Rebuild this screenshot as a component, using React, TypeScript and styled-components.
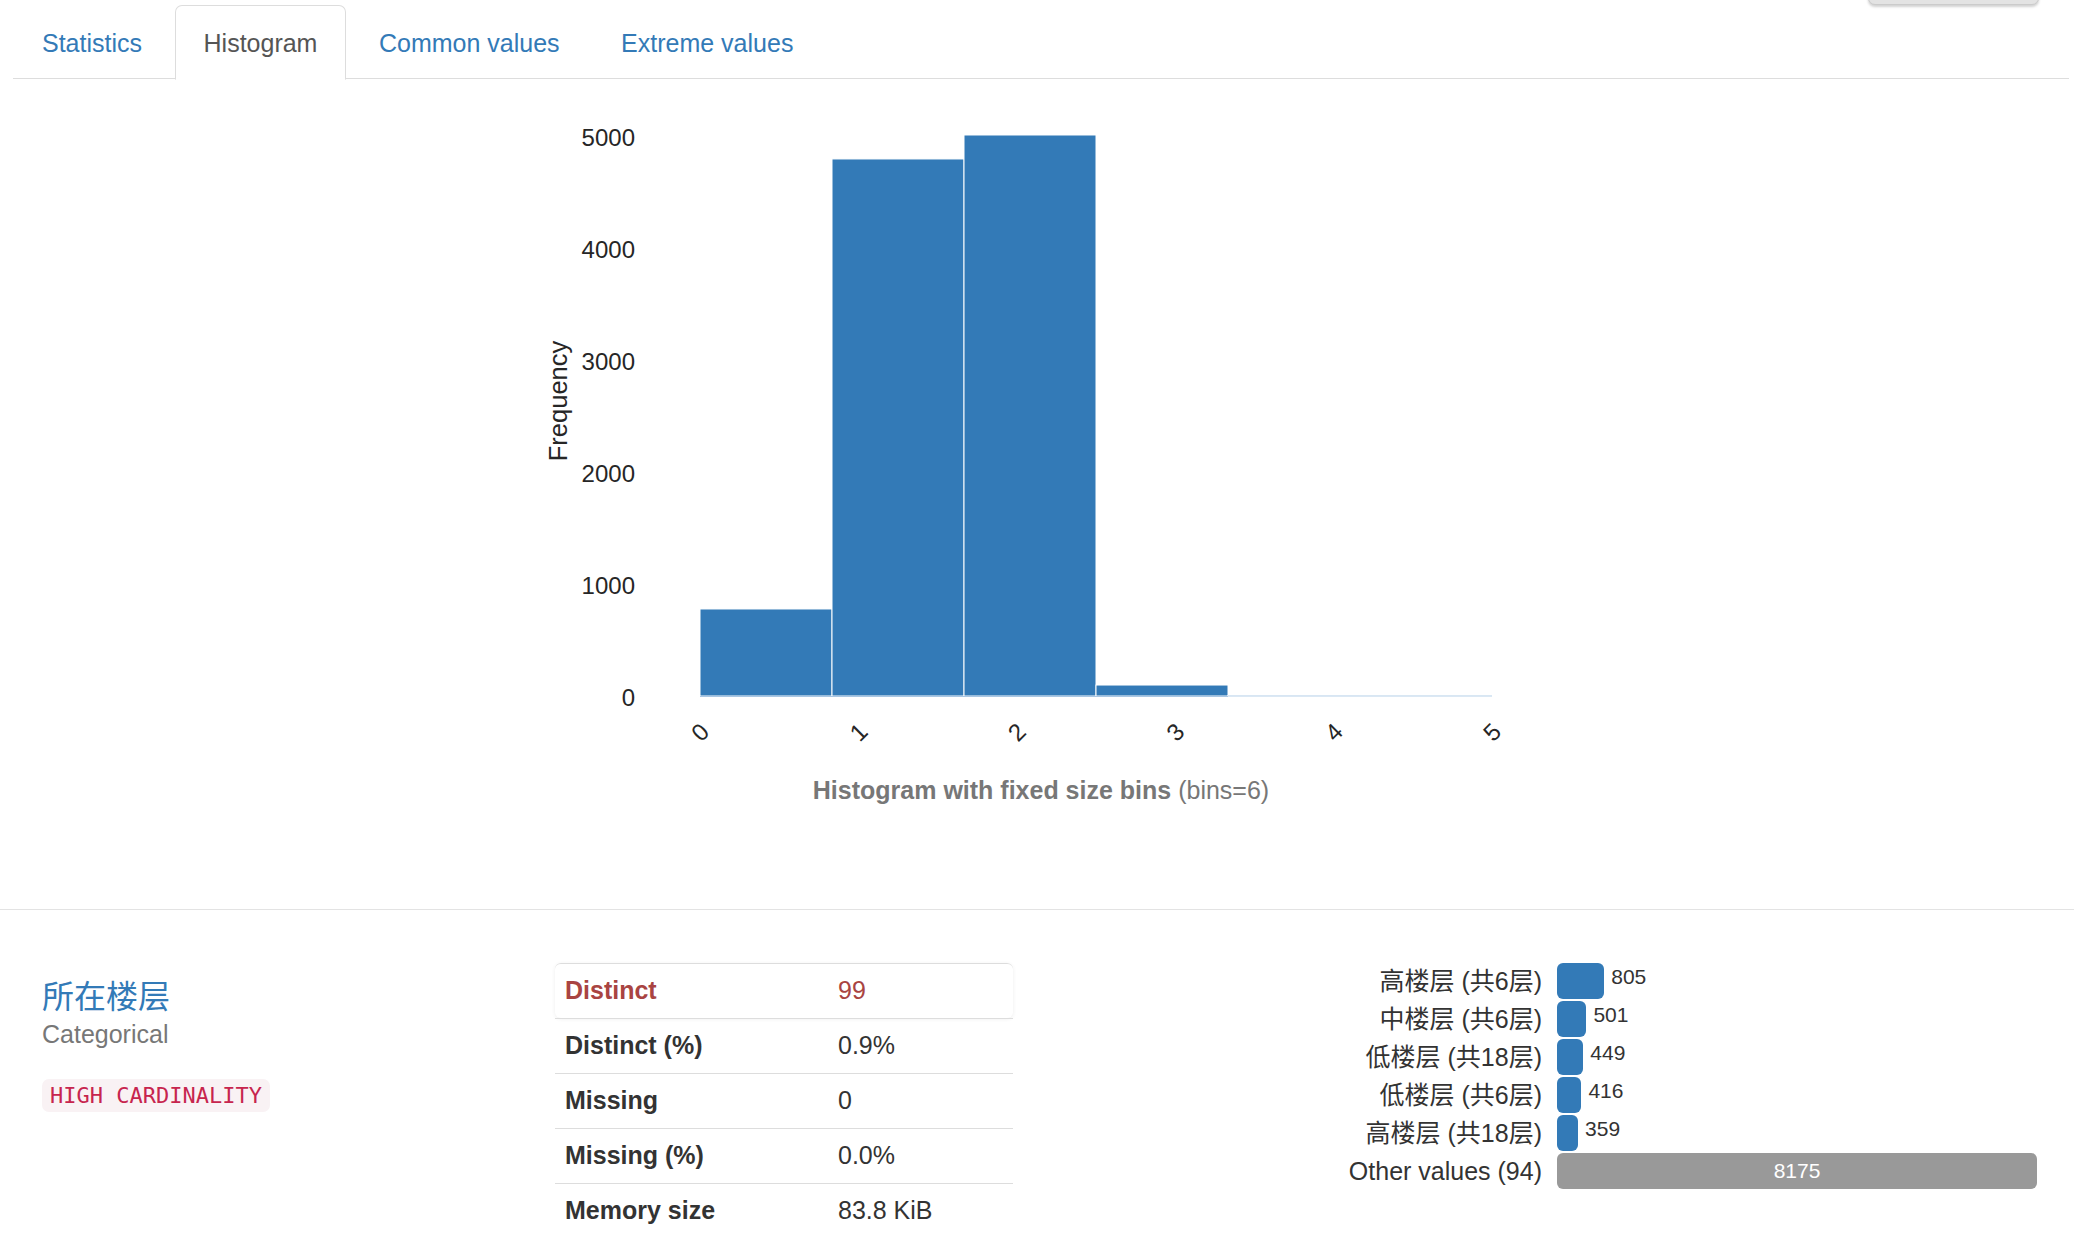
import React from "react";
import styled, { createGlobalStyle, css } from "styled-components";

const Global = createGlobalStyle`
  html, body { margin: 0; padding: 0; background: #fff; }
  body {
    font-family: "Liberation Sans", Arial, "Noto Sans CJK SC", sans-serif;
    font-size: 25px;
    line-height: 35px;
    color: #333;
  }
  * { box-sizing: border-box; }
`;

const Page = styled.div`
  width: 2074px;
`;

const TopBar = styled.div`
  height: 5px;
  display: flex;
  justify-content: flex-end;
  align-items: flex-end;
  padding-right: 35px;
`;

const ToggleButton = styled.button`
  flex: 0 0 171px;
  height: 46px;
  padding: 0;
  background: #e3e3e3;
  border: 1px solid #cbcbcb;
  border-radius: 7px;
  box-shadow: 0 1.5px 2.5px rgba(0, 0, 0, 0.18);
`;

const Tabs = styled.div`
  padding: 0 5px 0 13px;
`;

const TabList = styled.ul`
  display: flex;
  list-style: none;
  margin: 0;
  padding: 0;
  border-bottom: 1.75px solid #ddd;
`;

const Tab = styled.li<{ $active?: boolean }>`
  margin: 0 3.5px -1.75px 0;
  padding: 20px 28px 17.5px;
  line-height: 35px;
  border: 1.75px solid transparent;
  border-radius: 7px 7px 0 0;
  color: #337ab7;
  cursor: pointer;
  ${(p) =>
    p.$active &&
    css`
      color: #555;
      background: #fff;
      border-color: #ddd #ddd #fff;
    `}
`;

const Pane = styled.div`
  padding: 21px 0 101px;
`;

const ChartSvg = styled.svg`
  display: block;
  margin: 0 auto;
  font-family: "Liberation Sans", Arial, sans-serif;
`;

const Caption = styled.div`
  margin-top: 13.5px;
  text-align: center;
  color: #777;
`;

const CaptionStrong = styled.strong`
  font-weight: bold;
  color: #777;
`;

const VarRow = styled.section`
  display: flex;
  border-top: 1.75px solid #e3e3e3;
  padding-top: 52.5px;
  padding-bottom: 20px;
`;

const NameCol = styled.div`
  flex: 0 0 555px;
  padding: 14.5px 0 0 42px;
`;

const VarTitle = styled.h4`
  margin: 0;
  font-family: "Noto Sans CJK SC", "Liberation Sans", sans-serif;
  font-size: 32px;
  line-height: 35px;
  font-weight: normal;
  color: #337ab7;
`;

const VarType = styled.div`
  margin-top: 5px;
  color: #777;
`;

const Badge = styled.code`
  display: inline-block;
  margin-top: 27px;
  padding: 3.5px 8px;
  font-family: "DejaVu Sans Mono", "Liberation Mono", monospace;
  font-size: 22px;
  line-height: 26px;
  color: #c7254e;
  background: #f9f2f4;
  border-radius: 7px;
`;

const StatTable = styled.div`
  flex: 0 0 458px;
`;

const StatRow = styled.div<{ $alert?: boolean }>`
  display: grid;
  grid-template-columns: 274px 1fr;
  border-top: 1.75px solid #ddd;
  ${(p) =>
    p.$alert &&
    css`
      color: #a94442;
      border-radius: 6px;
      box-shadow: 0 1px 4px rgba(0, 0, 0, 0.07);
    `}
`;

const StatLabel = styled.div`
  padding: 9.5px 10px;
  font-weight: bold;
`;

const StatValue = styled.div`
  padding: 9.5px 9px;
`;

const FreqCol = styled.div`
  flex: 1;
  display: flex;
  flex-direction: column;
  gap: 2px;
  padding-top: 0.5px;
`;

const FreqRow = styled.div`
  display: grid;
  grid-template-columns: 529px 1fr;
  column-gap: 15px;
  height: 36px;
`;

const FreqLabel = styled.div`
  text-align: right;
  line-height: 36px;
  white-space: nowrap;
`;

const BarCell = styled.div`
  display: flex;
  align-items: flex-start;
`;

const Bar = styled.div<{ $other?: boolean }>`
  flex-shrink: 0;
  height: 36px;
  border-radius: 6px;
  background: ${(p) => (p.$other ? "#999" : "#337ab7")};
  color: #fff;
  font-size: 21px;
  line-height: 36px;
  text-align: center;
`;

const Count = styled.span`
  margin-left: 7px;
  font-size: 21px;
  line-height: 27px;
  color: #333;
`;

const bins = [777, 4795, 5009, 98, 2, 1];
const X0 = 700;
const BW = 132;
const BASE = 696;
const K = 0.112;

const Histogram: React.FC = () => (
  <ChartSvg width={1042} height={660} viewBox="520 100 1042 660">
    {bins.map((v, i) => {
      const h = Math.max(v * K, 0);
      return (
        <rect
          key={i}
          x={X0 + i * BW}
          y={BASE - h}
          width={BW}
          height={h}
          fill="#337ab7"
          stroke="#ffffff"
          strokeWidth={1}
        />
      );
    })}
    <line x1={X0 + 4 * BW} y1={BASE} x2={X0 + 6 * BW} y2={BASE} stroke="#cfe0f1" strokeWidth={1.5} />
    <line x1={X0} y1={BASE + 0.5} x2={X0 + 4 * BW} y2={BASE + 0.5} stroke="#a9c6e3" strokeWidth={1} />
    {[0, 1000, 2000, 3000, 4000, 5000].map((t) => (
      <text
        key={t}
        x={635}
        y={BASE - t * K + 1}
        textAnchor="end"
        dominantBaseline="central"
        fontSize={24}
        fill="#262626"
      >
        {t}
      </text>
    ))}
    <text
      transform="translate(558 401) rotate(-90)"
      textAnchor="middle"
      dominantBaseline="central"
      fontSize={25.5}
      fill="#262626"
    >
      Frequency
    </text>
    {[0, 1, 2, 3, 4, 5].map((t) => {
      const cx = X0 + t * 158.4;
      const cy = 732;
      return (
        <text
          key={t}
          x={cx}
          y={cy}
          transform={`rotate(-45 ${cx} ${cy})`}
          textAnchor="middle"
          dominantBaseline="central"
          fontSize={24}
          fill="#262626"
        >
          {t}
        </text>
      );
    })}
  </ChartSvg>
);

const stats = [
  { label: "Distinct", value: "99", alert: true },
  { label: "Distinct (%)", value: "0.9%" },
  { label: "Missing", value: "0" },
  { label: "Missing (%)", value: "0.0%" },
  { label: "Memory size", value: "83.8 KiB" },
];

const freqs = [
  { label: "高楼层 (共6层)", count: 805 },
  { label: "中楼层 (共6层)", count: 501 },
  { label: "低楼层 (共18层)", count: 449 },
  { label: "低楼层 (共6层)", count: 416 },
  { label: "高楼层 (共18层)", count: 359 },
];
const OTHER = 8175;
const FULL = 480;

export default function App() {
  return (
    <Page>
      <Global />
      <TopBar>
        <ToggleButton aria-label="toggle details" />
      </TopBar>
      <Tabs>
        <TabList>
          <Tab>Statistics</Tab>
          <Tab $active>Histogram</Tab>
          <Tab>Common values</Tab>
          <Tab>Extreme values</Tab>
        </TabList>
        <Pane>
          <Histogram />
          <Caption>
            <CaptionStrong>Histogram with fixed size bins</CaptionStrong> (bins=6)
          </Caption>
        </Pane>
      </Tabs>
      <VarRow>
        <NameCol>
          <VarTitle>所在楼层</VarTitle>
          <VarType>Categorical</VarType>
          <Badge>HIGH CARDINALITY</Badge>
        </NameCol>
        <StatTable>
          {stats.map((s) => (
            <StatRow key={s.label} $alert={s.alert}>
              <StatLabel>{s.label}</StatLabel>
              <StatValue>{s.value}</StatValue>
            </StatRow>
          ))}
        </StatTable>
        <FreqCol>
          {freqs.map((f) => (
            <FreqRow key={f.label}>
              <FreqLabel>{f.label}</FreqLabel>
              <BarCell>
                <Bar style={{ width: `${(f.count / OTHER) * FULL}px` }} />
                <Count>{f.count}</Count>
              </BarCell>
            </FreqRow>
          ))}
          <FreqRow>
            <FreqLabel>Other values (94)</FreqLabel>
            <BarCell>
              <Bar $other style={{ width: `${FULL}px` }}>
                {OTHER}
              </Bar>
            </BarCell>
          </FreqRow>
        </FreqCol>
      </VarRow>
    </Page>
  );
}
